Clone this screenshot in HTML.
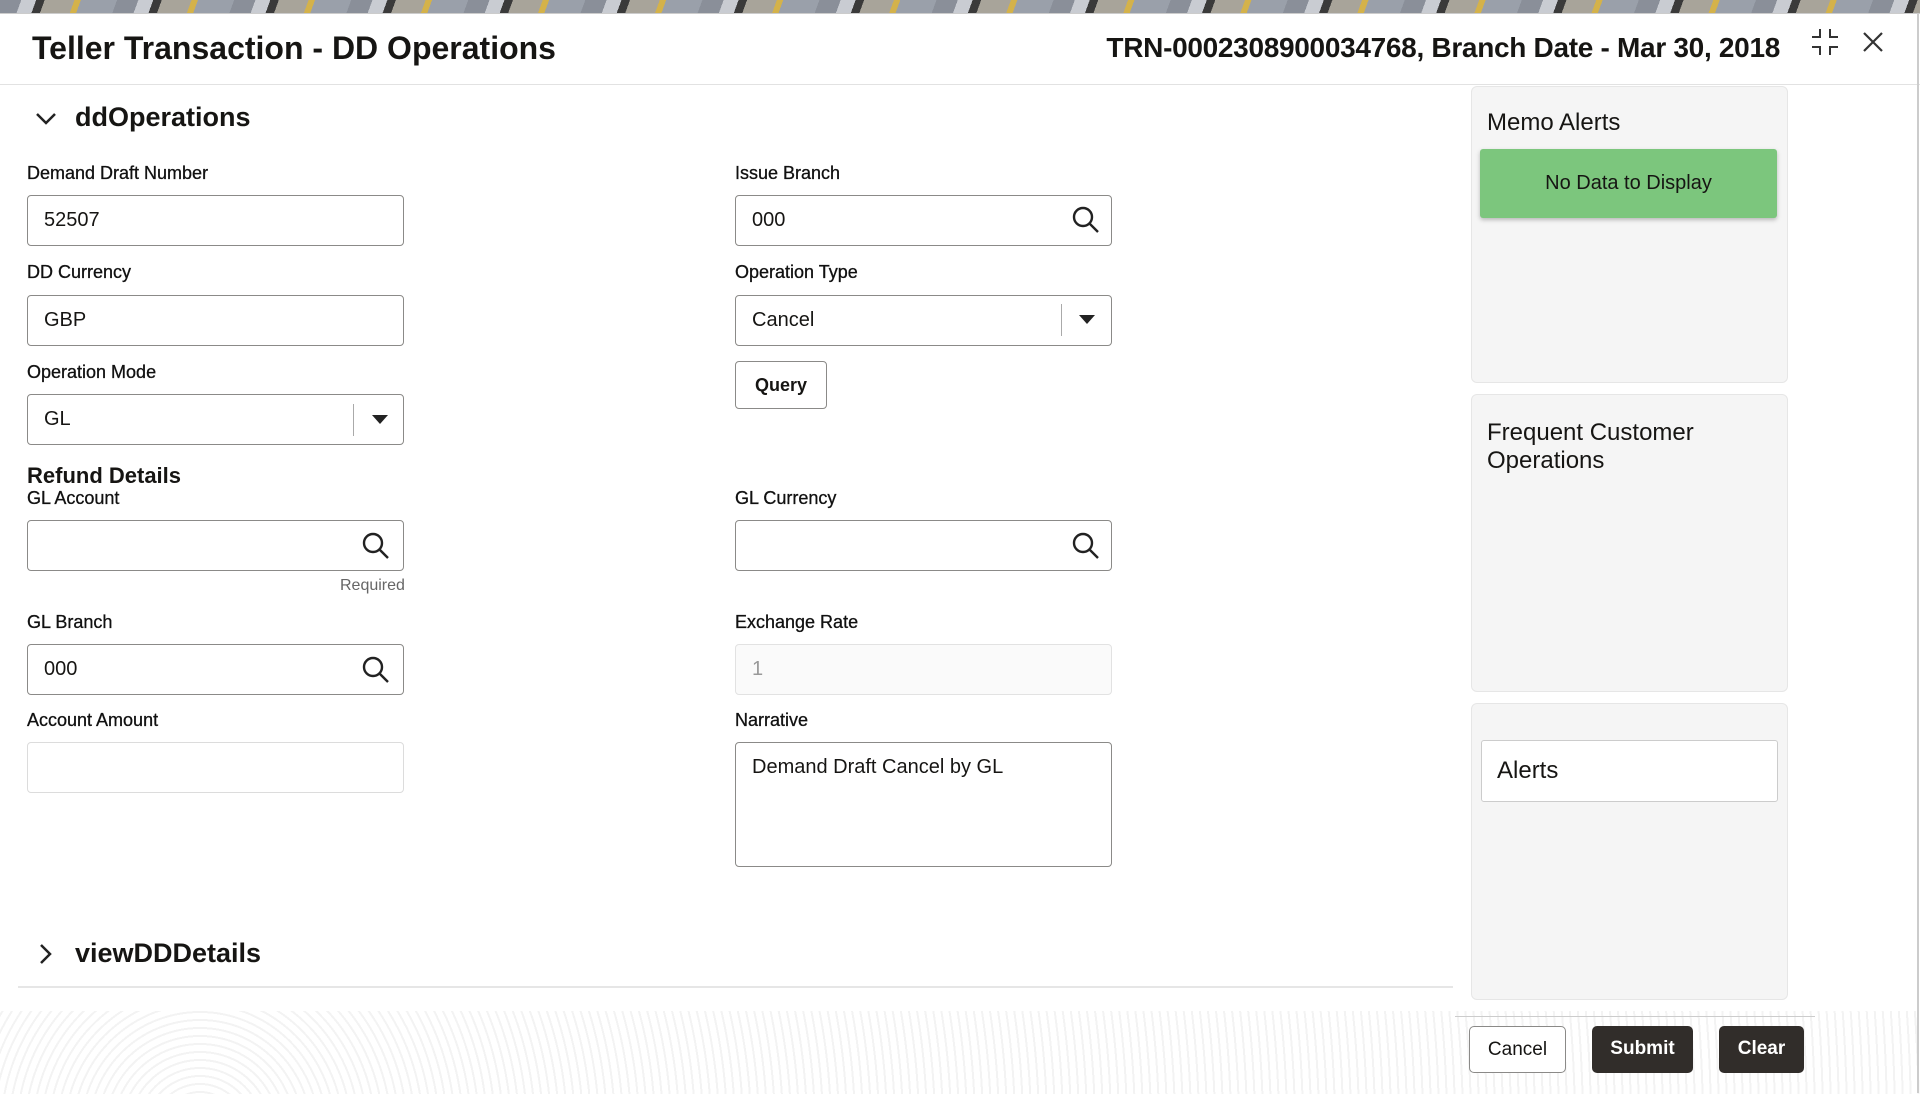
<!DOCTYPE html>
<html><head><meta charset="utf-8"><style>
*{box-sizing:border-box;margin:0;padding:0}
body{width:1920px;height:1094px;overflow:hidden;background:#fff;font-family:"Liberation Sans",sans-serif;color:#161513;position:relative}
.abs{position:absolute}
.strip{left:0;top:0;width:1920px;height:13px;background:repeating-linear-gradient(110deg,#8a8f99 0 20px,#c9ccd2 20px 34px,#3a3a3a 34px 42px,#a8a49a 42px 70px,#d4b24a 70px 76px,#9aa0aa 76px 110px)}
.modal{left:0;top:13px;width:1920px;height:1081px;background:#fff;border-top:1px solid #ccc}
.hdr{left:0;top:13px;width:1920px;height:72px;border-bottom:1px solid #e2e2e2}
.title{left:32px;top:30px;font-size:32px;font-weight:bold}
.trn{right:140px;top:32px;font-size:28px;font-weight:bold;letter-spacing:-.3px}
.lbl{font-size:18px;color:#111;-webkit-text-stroke:.3px #111}
.inp{border:1px solid #8b8a88;border-radius:4px;background:#fff;height:51px;width:377px;font-size:20px;padding:13px 16px}
.inp.l{border-color:#dcdcdc}
.dis{background:#fafafa;border-color:#e2e2e2;color:#999}
.panel{left:1471px;width:317px;background:#f5f5f5;border:1px solid #e6e6e6;border-radius:6px}
.btn{border-radius:5px;font-size:19px;font-weight:bold;text-align:center;line-height:45px;height:47px}
</style></head><body>
<div class="abs strip"></div>
<div class="abs modal"></div>
<div class="abs hdr"></div>
<div class="abs title">Teller Transaction - DD Operations</div>
<div class="abs trn">TRN-0002308900034768, Branch Date - Mar 30, 2018</div>
<svg class="abs" style="left:1810px;top:27px" width="30" height="30" viewBox="0 0 30 30" fill="none" stroke="#333" stroke-width="2"><path d="M10 2v8H2M20 2v8h8M10 28v-8H2M20 28v-8h8"/></svg>
<svg class="abs" style="left:1862px;top:31px" width="22" height="22" viewBox="0 0 22 22" stroke="#333" stroke-width="2.2"><path d="M2 2l18 18M20 2L2 20"/></svg>

<svg class="abs" style="left:35px;top:110px" width="22" height="16" viewBox="0 0 22 16" fill="none" stroke="#222" stroke-width="2.5"><path d="M2 4l9 9 9-9"/></svg>
<div class="abs" style="left:75px;top:102px;font-size:27px;font-weight:bold">ddOperations</div>

<div class="abs lbl" style="left:27px;top:163px">Demand Draft Number</div>
<div class="abs inp" style="left:27px;top:195px">52507</div>
<div class="abs lbl" style="left:27px;top:262px">DD Currency</div>
<div class="abs inp" style="left:27px;top:295px">GBP</div>
<div class="abs lbl" style="left:27px;top:362px">Operation Mode</div>
<div class="abs inp" style="left:27px;top:394px">GL</div>
<div class="abs" style="left:353px;top:404px;width:1px;height:32px;background:#aaa"></div>
<svg class="abs" style="left:372px;top:415px" width="16" height="10"><path d="M0 0h16L8 9z" fill="#222"/></svg>

<div class="abs" style="left:27px;top:463px;font-size:22px;font-weight:bold">Refund Details</div>
<div class="abs lbl" style="left:27px;top:488px">GL Account</div>
<div class="abs inp" style="left:27px;top:520px"></div>
<div class="abs" style="left:340px;top:577px;font-size:16px;color:#666">Required</div>
<div class="abs lbl" style="left:27px;top:612px">GL Branch</div>
<div class="abs inp" style="left:27px;top:644px">000</div>
<div class="abs lbl" style="left:27px;top:710px">Account Amount</div>
<div class="abs inp l" style="left:27px;top:742px"></div>

<div class="abs lbl" style="left:735px;top:163px">Issue Branch</div>
<div class="abs inp" style="left:735px;top:195px">000</div>
<div class="abs lbl" style="left:735px;top:262px">Operation Type</div>
<div class="abs inp" style="left:735px;top:295px">Cancel</div>
<div class="abs" style="left:1061px;top:304px;width:1px;height:32px;background:#aaa"></div>
<svg class="abs" style="left:1079px;top:315px" width="16" height="10"><path d="M0 0h16L8 9z" fill="#222"/></svg>
<div class="abs" style="left:735px;top:361px;width:92px;height:48px;border:1px solid #8b8a88;border-radius:4px;font-size:18px;font-weight:bold;text-align:center;line-height:46px">Query</div>
<div class="abs lbl" style="left:735px;top:488px">GL Currency</div>
<div class="abs inp" style="left:735px;top:520px"></div>
<div class="abs lbl" style="left:735px;top:612px">Exchange Rate</div>
<div class="abs inp dis" style="left:735px;top:644px">1</div>
<div class="abs lbl" style="left:735px;top:710px">Narrative</div>
<div class="abs inp" style="left:735px;top:742px;height:125px">Demand Draft Cancel by GL</div>

<svg class="abs" style="left:362px;top:532px" width="28" height="28" viewBox="0 0 28 28" fill="none" stroke="#222" stroke-width="2.4"><circle cx="11" cy="11" r="9"/><path d="M18 18l8 8"/></svg>
<svg class="abs" style="left:362px;top:656px" width="28" height="28" viewBox="0 0 28 28" fill="none" stroke="#222" stroke-width="2.4"><circle cx="11" cy="11" r="9"/><path d="M18 18l8 8"/></svg>
<svg class="abs" style="left:1072px;top:206px" width="28" height="28" viewBox="0 0 28 28" fill="none" stroke="#222" stroke-width="2.4"><circle cx="11" cy="11" r="9"/><path d="M18 18l8 8"/></svg>
<svg class="abs" style="left:1072px;top:532px" width="28" height="28" viewBox="0 0 28 28" fill="none" stroke="#222" stroke-width="2.4"><circle cx="11" cy="11" r="9"/><path d="M18 18l8 8"/></svg>

<svg class="abs" style="left:38px;top:943px" width="14" height="22" viewBox="0 0 14 22" fill="none" stroke="#222" stroke-width="2.5"><path d="M3 2l9 9-9 9"/></svg>
<div class="abs" style="left:75px;top:938px;font-size:27px;font-weight:bold">viewDDDetails</div>
<div class="abs" style="left:18px;top:986px;width:1435px;height:2px;background:#e6e6e6"></div>

<div class="abs panel" style="top:86px;height:297px"></div>
<div class="abs" style="left:1487px;top:109px;font-size:24px">Memo Alerts</div>
<div class="abs" style="left:1480px;top:149px;width:297px;height:69px;background:#7cc67d;border-radius:3px;box-shadow:0 2px 4px rgba(0,0,0,.25);font-size:20px;text-align:center;line-height:69px">No Data to Display</div>
<div class="abs panel" style="top:394px;height:298px"></div>
<div class="abs" style="left:1487px;top:419px;font-size:24px;line-height:28px">Frequent Customer<br>Operations</div>
<div class="abs panel" style="top:703px;height:297px"></div>
<div class="abs" style="left:1481px;top:740px;width:297px;height:62px;background:#fff;border:1px solid #ccc;border-radius:3px;font-size:24px;padding:16px 15px">Alerts</div>

<div class="abs" style="left:0;top:1011px;width:1920px;height:83px;background:repeating-radial-gradient(circle at 200px 120px,#fff 0 6px,#f3f3f3 6px 8px)"></div>
<div class="abs" style="left:1455px;top:1016px;width:360px;height:1px;background:#ccc"></div>
<div class="abs btn" style="left:1469px;top:1026px;width:97px;border:1px solid #8b8a88;background:#fff;font-weight:normal">Cancel</div>
<div class="abs btn" style="left:1592px;top:1026px;width:101px;background:#312d2a;color:#fff">Submit</div>
<div class="abs btn" style="left:1719px;top:1026px;width:85px;background:#312d2a;color:#fff">Clear</div>
<div class="abs" style="left:1917px;top:13px;width:2px;height:1080px;background:#ccc"></div>
</body></html>
